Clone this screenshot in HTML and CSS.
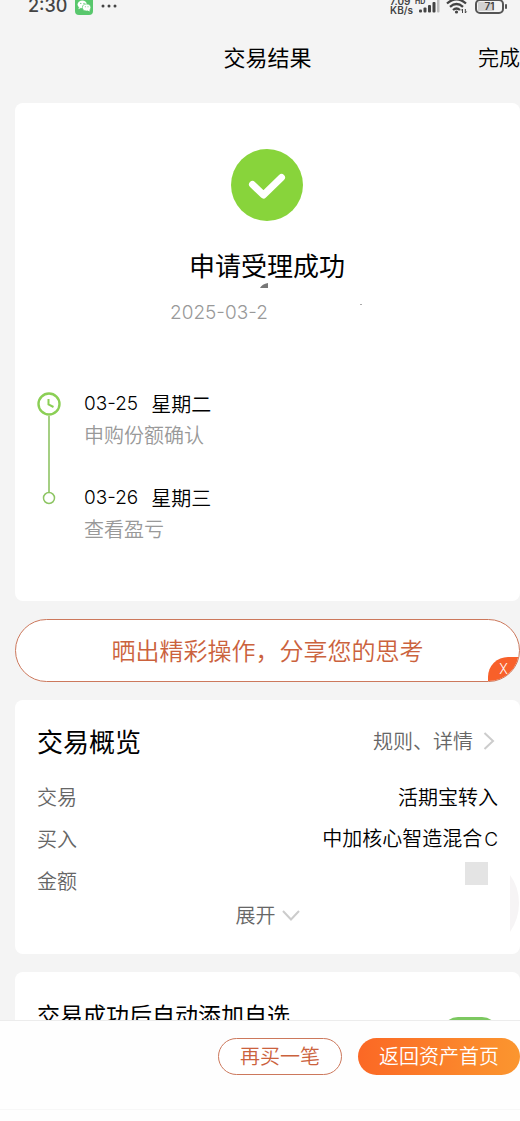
FILE: index.html
```html
<!DOCTYPE html>
<html lang="zh-CN">
<head>
<meta charset="utf-8">
<meta name="viewport" content="width=device-width, initial-scale=1">
<title>交易结果</title>
<link rel="stylesheet" href="styles.css">
</head>
<body>
<div class="status">
  <span class="clock">2:30</span>
  <svg class="wechat" width="18" height="18" viewBox="0 0 18 18" aria-hidden="true">
    <rect width="18" height="18" rx="4" fill="#58c76c"/>
    <ellipse cx="7.3" cy="7.4" rx="4.7" ry="3.9" fill="#fff"/>
    <path d="M4 10l-.6 2.3 2.5-1.2z" fill="#fff"/>
    <ellipse cx="11.6" cy="10.5" rx="4.2" ry="3.5" fill="#fff" stroke="#58c76c" stroke-width=".7"/>
    <path d="M12.5 13.4l2.2 1.1-.4-2z" fill="#fff"/>
    <g fill="#58c76c"><circle cx="5.8" cy="6.4" r=".6"/><circle cx="9" cy="6.4" r=".6"/><circle cx="10.3" cy="9.7" r=".5"/><circle cx="13" cy="9.7" r=".5"/></g>
  </svg>
  <svg class="dots" width="16" height="4" viewBox="0 0 16 4" aria-hidden="true"><g fill="#444"><circle cx="2" cy="2" r="1.5"/><circle cx="8" cy="2" r="1.5"/><circle cx="14" cy="2" r="1.5"/></g></svg>
  <span class="speed">7.09<br>KB/s</span>
  <span class="signal"><span class="hd">HD</span>
    <svg width="21" height="14" viewBox="0 0 21 14" aria-hidden="true"><g fill="#444"><rect x="0" y="10.500" width="3" height="3" rx="1"/><rect x="4.500" y="8.500" width="3" height="5" rx="1"/><rect x="9" y="6" width="3" height="7.500" rx="1"/><rect x="13.500" y="3" width="3" height="10.500" rx="1"/></g><rect x="18" y="0" width="2.500" height="13.500" rx="1" fill="#bbb"/></svg>
  </span>
  <svg width="22" height="16" viewBox="0 0 22 16" aria-hidden="true">
    <g fill="none" stroke="#444" stroke-width="2.300"><path d="M1 5.500Q10.500-2.800 20 5.500"/><path d="M4 8.800Q10.500 3.200 17 8.800"/><path d="M7 12Q10.500 9 14 12"/></g>
    <circle cx="10.500" cy="14" r="1.600" fill="#444"/>
    <path d="M16.500 15v-4l-1.300 1.500M19.300 11v4l1.300-1.500" fill="none" stroke="#444"/>
  </svg>
  <span class="battery"><span class="level">71</span></span>
</div>
<header class="nav">
  <h1>交易结果</h1>
  <button class="plain done" type="button">完成</button>
</header>
<main class="content">
  <section class="card result">
    <svg width="72" height="72" viewBox="0 0 72 72" role="img" aria-label="成功"><circle cx="36" cy="36" r="36" fill="#88d43b"/><path d="M21.500 35.500L32.500 46L50.500 28.500" fill="none" stroke="#fff" stroke-width="7" stroke-linecap="round" stroke-linejoin="round"/></svg>
    <div class="result-title">
      <h2>申请受理成功</h2>
      <svg class="speck" width="8" height="5" viewBox="0 0 8 5" aria-hidden="true"><path d="M0 5Q2 1 8 0V5z" fill="#777"/></svg>
    </div>
    <div class="stamp"><time class="num">2025-03-2</time><i class="dot"></i></div>
    <ol class="timeline">
      <li>
        <div class="rail">
          <svg width="24" height="24" viewBox="0 0 24 24" aria-hidden="true"><circle cx="12" cy="12" r="10.500" fill="#fff" stroke="#8bcf55" stroke-width="2.400"/><path d="M11.500 7V12.500L16.500 15" fill="none" stroke="#8bcf55" stroke-width="2"/></svg>
          <i class="line"></i>
        </div>
        <div>
          <p class="day"><span class="num">03-25</span><span>星期二</span></p>
          <p class="note">申购份额确认</p>
        </div>
      </li>
      <li>
        <div class="rail">
          <svg width="24" height="24" viewBox="0 0 24 24" aria-hidden="true"><path d="M12 0V6" stroke="#a5cf83" stroke-width="2"/><circle cx="12" cy="12" r="5.500" fill="#fff" stroke="#8dc563" stroke-width="1.500"/></svg>
        </div>
        <div>
          <p class="day"><span class="num">03-26</span><span>星期三</span></p>
          <p class="note">查看盈亏</p>
        </div>
      </li>
    </ol>
  </section>

  <div class="share">
    <button class="plain share-main" type="button">晒出精彩操作，分享您的思考</button>
    <button class="plain share-close" type="button" aria-label="关闭">X</button>
  </div>

  <section class="card overview">
    <div class="overview-head">
      <h2>交易概览</h2>
      <a class="rules" href="#rules">规则、详情<svg width="12" height="20" viewBox="0 0 12 20" aria-hidden="true"><path d="M1.500 2L10 10L1.500 18" fill="none" stroke="#ccc" stroke-width="2"/></svg></a>
    </div>
    <dl>
      <div class="row"><dt>交易</dt><dd>活期宝转入</dd></div>
      <div class="row"><dt>买入</dt><dd>中加核心智造混合<span class="latin">C</span></dd></div>
      <div class="row"><dt>金额</dt><dd><i class="mask"></i></dd></div>
    </dl>
    <button class="plain expand" type="button">展开<svg width="18" height="11" viewBox="0 0 18 11" aria-hidden="true"><path d="M1 1L9 9.500L17 1" fill="none" stroke="#ccc" stroke-width="2"/></svg></button>
    <svg class="float" width="9" height="57" viewBox="0 0 9 57" aria-hidden="true"><path d="M0 0Q9 12 9 28T0 57z" fill="#f6f4f5"/></svg>
  </section>

  <section class="card favorite">
    <label for="auto">交易成功后自动添加自选</label>
    <input id="auto" class="switch" type="checkbox" role="switch" checked>
  </section>
</main>
<footer class="actions">
  <div class="buttons">
    <button class="again" type="button">再买一笔</button>
    <button class="home" type="button">返回资产首页</button>
  </div>
</footer>
</body>
</html>
```
FILE: styles.css
```css
* { box-sizing: border-box; margin: 0; padding: 0; }
body {
  display: flex;
  flex-direction: column;
  height: 100vh;
  overflow: hidden;
  background: #f4f4f4;
  color: #000;
  font: 350 20px/24px "Noto Sans CJK SC", sans-serif;
}
h1, h2 { font-weight: 400; }
ol { list-style: none; }
button { font: inherit; cursor: pointer; }
.plain { border: 0; background: none; color: inherit; }
.num { font-family: Inter, sans-serif; font-size: 19px; }

.status {
  display: flex;
  align-items: center;
  flex: none;
  height: 12px;
  padding: 0 16px 0 28px;
  color: #444;
  font-family: Inter, sans-serif;
}
.clock { font-size: 18px; font-weight: 500; line-height: 12px; }
.wechat { margin-left: 8px; }
.dots { margin-left: 8px; }
.speed { margin: 0 4px 0 auto; font-size: 10px; font-weight: 600; line-height: 9px; }
.signal { position: relative; display: flex; padding-left: 2px; margin-right: 6px; }
.hd { position: absolute; left: -2px; top: -1px; font-size: 7px; font-weight: 700; line-height: 8px; }
.battery {
  position: relative;
  margin-left: 7px;
  width: 29px;
  height: 15px;
  padding: 1px;
  border: 2px solid #555;
  border-radius: 5px;
}
.battery::after {
  content: "";
  position: absolute;
  right: -5px;
  top: 3px;
  width: 2px;
  height: 5px;
  border-radius: 1px;
  background: #555;
}
.level { display: block; background: linear-gradient(90deg, #d2d2d2 71%, transparent 71%); font-size: 10px; font-weight: 600; line-height: 9px; text-align: center; }

.nav {
  display: grid;
  grid-template-columns: 1fr auto 1fr;
  align-items: center;
  flex: none;
  height: 91px;
  padding: 0 0 4px 15px;
}
.nav h1 { grid-column: 2; font-size: 22px; line-height: 30px; }
.done { justify-self: end; font-size: 21px; line-height: 30px; }

.content {
  display: flex;
  flex-direction: column;
  gap: 18px;
  flex: 1;
  min-height: 0;
  padding-left: 15px;
  overflow: hidden;
}
.content > * { flex: none; }
.card { border-radius: 8px; background: #fff; }

.result {
  display: flex;
  flex-direction: column;
  align-items: center;
  padding: 46px 23px 60px 22px;
}
.result-title { position: relative; margin-top: 28px; }
.result-title h2 { font-size: 26px; line-height: 32px; }
.speck { position: absolute; left: 71px; top: 34px; }
.stamp { display: flex; width: 194px; margin-top: 20px; color: #999; }
.stamp time { width: 97px; overflow: hidden; white-space: nowrap; }
.dot { width: 2px; height: 1px; margin: 3px 2px 0 auto; background: #aaa; }

.timeline { align-self: stretch; margin-top: 67px; }
.timeline li { display: flex; gap: 23px; }
.timeline li:first-child { min-height: 94px; }
.rail { display: flex; flex-direction: column; align-items: center; }
.line { flex: 1; width: 2px; background: #a5cf83; }
.day { display: flex; gap: 13px; }
.note { margin-top: 7px; color: #999; }

.share {
  position: relative;
  height: 63px;
  border: 1px solid #cc785c;
  border-radius: 32px;
  background: #fff;
  color: #cb623d;
  overflow: hidden;
}
.share-main { width: 100%; height: 100%; padding-bottom: 2px; font-size: 24px; }
.share-close {
  position: absolute;
  right: 0;
  bottom: 0;
  width: 31px;
  height: 24px;
  border-radius: 20px 0 0 0;
  background: #f8602a;
  color: #fff;
  font: 300 14px/24px Roboto, sans-serif;
}

.overview { position: relative; padding: 20px 22px 26px; }
.overview-head { display: flex; align-items: center; justify-content: space-between; height: 42px; margin-bottom: 14px; }
.overview-head h2 { font-size: 26px; line-height: 32px; }
.rules { display: flex; align-items: center; gap: 10px; margin-right: 3px; color: #666; text-decoration: none; }
.row { display: flex; align-items: center; justify-content: space-between; height: 42px; }
.row dt { color: #666; }
.latin { margin-left: 2px; font-family: Inter, sans-serif; font-size: 19px; }
.mask { display: block; width: 23px; height: 23px; margin: 0 10px 15px 0; background: #e4e4e4; }
.expand { display: flex; align-items: center; gap: 6px; height: 26px; margin: 0 auto; color: #666; }
.float { position: absolute; right: 1px; bottom: 22px; }

.favorite { display: flex; align-items: flex-start; justify-content: space-between; padding: 27px 22px 40px; }
.favorite label { font-size: 23px; font-weight: 400; line-height: 30px; }
.switch { appearance: none; width: 56px; height: 32px; margin-top: 18px; border-radius: 16px; background: #7cc860; }

.actions { flex: none; height: 101px; padding-top: 17px; border-top: 1px solid #ececec; background: #fefefe; }
.buttons { display: flex; justify-content: flex-end; gap: 16px; padding-bottom: 34px; border-bottom: 1px solid #f7f7f7; }
.buttons button { height: 37px; padding: 0 21px 2px; border-radius: 19px; line-height: 24px; }
.again { border: 1px solid #cc785c; background: #fff; color: #cb623d; }
.home { border: 0; background: linear-gradient(90deg, #fb6825, #fb962f); color: #fff; }
```
